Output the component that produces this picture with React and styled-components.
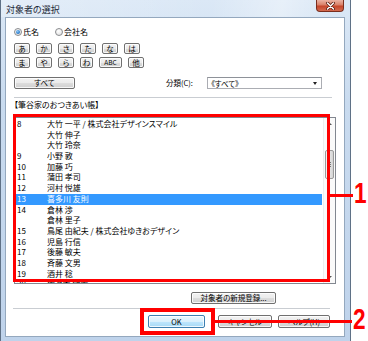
import styled, { createGlobalStyle } from 'styled-components';

const GlobalStyle = createGlobalStyle`
  html, body {
    margin: 0;
    padding: 0;
    background: #fff;
  }
  body {
    font-family: "Noto Sans CJK JP", "Noto Sans", sans-serif;
    font-feature-settings: "palt";
    color: #000;
  }
`;

const Page = styled.div`
  position: relative;
  width: 368px;
  height: 341px;
  overflow: hidden;
  background: #fff;
`;

const Window = styled.div`
  width: 351px;
  height: 341px;
  box-sizing: border-box;
  display: flex;
  flex-direction: column;
  border-left: 1px solid #5f7186;
  border-right: 1px solid #5f7186;
  background: linear-gradient(180deg, #dbe8f6 0%, #c9dbef 30%, #bfd3eb 100%);
`;

const TitleBar = styled.div`
  height: 17px;
  flex-shrink: 0;
  display: flex;
  align-items: flex-start;
  padding-left: 5px;
  background: linear-gradient(100deg, rgba(255,255,255,0.25) 0%, rgba(255,255,255,0) 60%, rgba(255,255,255,0.35) 80%, rgba(255,255,255,0) 95%);
`;

const Title = styled.span`
  font-size: 9px;
  line-height: 17px;
  margin-top: 1px;
  color: #1e2a38;
`;

const CloseButton = styled.div`
  margin-left: auto;
  margin-right: 6px;
  width: 28px;
  height: 12px;
  box-sizing: border-box;
  border: 1px solid #7a2d1d;
  border-top: none;
  border-radius: 0 0 4px 4px;
  background: linear-gradient(180deg, #eab2a3 0%, #d98068 45%, #c5452a 55%, #d36a4f 100%);
  display: flex;
  align-items: center;
  justify-content: center;
`;

const Client = styled.div`
  flex: 1;
  margin: 0 5px 4px 4px;
  background: #fff;
  border: 1px solid #94a8be;
  display: flex;
  flex-direction: column;
  padding: 9px 8px 0 8px;
  min-height: 0;
`;

const RadioRow = styled.div`
  display: flex;
  align-items: center;
  height: 10px;
`;

const RadioOption = styled.label`
  display: flex;
  align-items: center;
  font-size: 8px;
  line-height: 10px;
  margin-right: 16px;
`;

const RadioCircle = styled.span`
  width: 8px;
  height: 8px;
  box-sizing: border-box;
  border-radius: 50%;
  border: 1px solid #8a8c8f;
  background: radial-gradient(circle at 40% 35%, #ffffff 0%, #e6e6e6 70%, #d2d2d2 100%);
  margin-right: 1px;
  display: flex;
  align-items: center;
  justify-content: center;
  &::after {
    content: "";
    display: ${p => (p.$checked ? 'block' : 'none')};
    width: 4px;
    height: 4px;
    border-radius: 50%;
    background: radial-gradient(circle at 40% 35%, #8cc8f5 0%, #2f7fcf 60%, #1a4f8c 100%);
  }
`;

const KanaRow = styled.div`
  display: flex;
  gap: 6px;
  height: 11px;
  margin-top: ${p => p.$top}px;
`;

const Button = styled.button`
  box-sizing: border-box;
  margin: 0 ${p => p.$after || 0}px 0 0;
  padding: 0;
  width: ${p => p.$w}px;
  height: 100%;
  border: 1px solid ${p => (p.$default ? '#3c7fb1' : '#707070')};
  border-radius: 2px;
  background: ${p =>
    p.$default
      ? 'linear-gradient(180deg, #eaf6fd 0%, #d9f0fc 50%, #bee6fd 51%, #a7d9f5 100%)'
      : 'linear-gradient(180deg, #f2f2f2 0%, #ebebeb 50%, #dddddd 51%, #cfcfcf 100%)'};
  box-shadow: inset 0 0 0 1px rgba(255, 255, 255, 0.8);
  font-family: "Noto Sans CJK JP", "Noto Sans", sans-serif;
  font-feature-settings: "palt";
  font-size: ${p => p.$fs || 7.5}px;
  line-height: 1;
  color: #000;
  display: flex;
  align-items: center;
  justify-content: center;
  white-space: nowrap;
  overflow: hidden;
  flex-shrink: 0;
`;

const FilterRow = styled.div`
  display: flex;
  align-items: center;
  height: 12px;
  margin-top: 9px;
`;

const FilterLabel = styled.span`
  margin-left: 91px;
  width: 41px;
  font-size: 7.5px;
  line-height: 12px;
  white-space: nowrap;
`;

const Select = styled.div`
  width: 115px;
  height: 12px;
  box-sizing: border-box;
  border: 1px solid #abadb3;
  border-top-color: #8e9299;
  background: #fff;
  display: flex;
  align-items: center;
  padding: 0 4px 0 3px;
  font-size: 7.5px;
  justify-content: space-between;
`;

const Caret = styled.span`
  width: 0;
  height: 0;
  border-left: 2.5px solid transparent;
  border-right: 2.5px solid transparent;
  border-top: 3px solid #222;
`;

const Divider = styled.div`
  height: 1px;
  background: #c9cdd2;
  box-shadow: 0 1px 0 #fff;
  margin: ${p => p.$top}px ${p => p.$right}px 0 ${p => p.$left || 0}px;
  flex-shrink: 0;
`;

const GroupLabel = styled.div`
  margin-top: 1px;
  font-size: 8px;
  line-height: 11px;
  height: 11px;
  white-space: nowrap;
`;

const ListBox = styled.div`
  margin-top: 7px;
  height: 167px;
  flex-shrink: 0;
  box-sizing: border-box;
  border: 1px solid #828790;
  display: flex;
  overflow: hidden;
  background: #fff;
`;

const Rows = styled.div`
  flex: 1;
  padding: 1px 1px 0;
  overflow: hidden;
`;

const Row = styled.div`
  display: flex;
  height: 10.7px;
  line-height: 10.7px;
  font-size: 8px;
  white-space: nowrap;
  padding-left: 1px;
  background: ${p => (p.$selected ? '#3399ff' : 'transparent')};
  color: ${p => (p.$selected ? '#fff' : '#000')};
`;

const RowNo = styled.span`
  width: 30px;
  flex-shrink: 0;
`;

const Scrollbar = styled.div`
  width: 12px;
  flex-shrink: 0;
  display: flex;
  flex-direction: column;
  background: #fafafa;
  border-left: 1px solid #ededed;
  box-sizing: border-box;
`;

const ScrollArrow = styled.div`
  height: 12px;
  display: flex;
  align-items: center;
  justify-content: center;
  &::after {
    content: "";
    width: 0;
    height: 0;
    border-left: 2px solid transparent;
    border-right: 2px solid transparent;
    ${p => (p.$down ? 'border-top: 2px solid #555;' : 'border-bottom: 2px solid #555;')}
  }
`;

const ScrollTrack = styled.div`
  flex: 1;
  display: flex;
  flex-direction: column;
  align-items: center;
`;

const Thumb = styled.div`
  margin-top: ${p => p.$offset}px;
  width: 9px;
  height: 29px;
  box-sizing: border-box;
  border: 1px solid #9a9a9a;
  border-radius: 2px;
  background: linear-gradient(90deg, #f4f4f4 0%, #e6e6e6 50%, #d4d4d4 100%);
  display: flex;
  flex-direction: column;
  align-items: center;
  justify-content: center;
  gap: 1px;
`;

const Grip = styled.span`
  width: 3px;
  height: 1px;
  background: #777;
`;

const NewRow = styled.div`
  margin-top: 8px;
  height: 12px;
  display: flex;
  padding-left: 177px;
  flex-shrink: 0;
`;

const ActionRow = styled.div`
  margin-top: 6px;
  height: 13px;
  display: flex;
  justify-content: flex-end;
  gap: 6px;
  padding-right: 6px;
  flex-shrink: 0;
`;

const Frame = styled.div`
  position: absolute;
  left: ${p => p.$x}px;
  top: ${p => p.$y}px;
  width: ${p => p.$w}px;
  height: ${p => p.$h}px;
  box-sizing: border-box;
  border: ${p => p.$t}px solid #ff0000;
`;

const Leader = styled.div`
  position: absolute;
  left: ${p => p.$x}px;
  top: ${p => p.$y}px;
  width: ${p => p.$w}px;
  height: 3px;
  background: #ff0000;
`;

const Callout = styled.div`
  position: absolute;
  left: ${p => p.$x}px;
  top: ${p => p.$y}px;
  font-family: "Liberation Sans", Arial, sans-serif;
  font-weight: 700;
  font-size: 29px;
  line-height: 29px;
  color: #ff0000;
  transform: scaleX(0.78);
  transform-origin: left top;
`;

const kanaTop = [
  { t: 'あ' }, { t: 'か' }, { t: 'さ' }, { t: 'た' }, { t: 'な' }, { t: 'は' },
];
const kanaBottom = [
  { t: 'ま', w: 16 }, { t: 'や', w: 16 }, { t: 'ら', w: 16 }, { t: 'わ', w: 13 }, { t: 'ABC', w: 23, fs: 6.5 }, { t: '他', w: 16 },
];

const people = [
  { no: '8', name: '大竹 一平 / 株式会社デザインスマイル' },
  { no: '', name: '大竹 伸子' },
  { no: '', name: '大竹 玲奈' },
  { no: '9', name: '小野 敦' },
  { no: '10', name: '加藤 巧' },
  { no: '11', name: '蒲田 孝司' },
  { no: '12', name: '河村 悦雄' },
  { no: '13', name: '喜多川 友則', selected: true },
  { no: '14', name: '倉林 渉' },
  { no: '', name: '倉林 里子' },
  { no: '15', name: '鳥尾 由紀夫 / 株式会社ゆきおデザイン' },
  { no: '16', name: '児島 行信' },
  { no: '17', name: '後藤 敏夫' },
  { no: '18', name: '斉藤 文男' },
  { no: '19', name: '酒井 稔' },
  { no: '20', name: '佐々木 健太' },
];

function App() {
  return (
    <Page>
      <GlobalStyle />
      <Window>
        <TitleBar>
          <Title>対象者の選択</Title>
          <CloseButton>
            <svg width="11" height="8" viewBox="0 0 11 8">
              <path d="M2.5 1 L8.5 7 M8.5 1 L2.5 7" stroke="#5a1a0e" strokeWidth="3" strokeLinecap="round" />
              <path d="M2.5 1 L8.5 7 M8.5 1 L2.5 7" stroke="#fff" strokeWidth="1.5" strokeLinecap="round" />
            </svg>
          </CloseButton>
        </TitleBar>
        <Client>
          <RadioRow>
            <RadioOption><RadioCircle $checked />氏名</RadioOption>
            <RadioOption><RadioCircle />会社名</RadioOption>
          </RadioRow>
          <KanaRow $top={6}>
            {kanaTop.map(k => <Button key={k.t} $w={16}>{k.t}</Button>)}
          </KanaRow>
          <KanaRow $top={3}>
            {kanaBottom.map(k => <Button key={k.t} $w={k.w} $fs={k.fs}>{k.t}</Button>)}
          </KanaRow>
          <FilterRow>
            <Button $w={61}>すべて</Button>
            <FilterLabel>分類(C):</FilterLabel>
            <Select>
              <span>《すべて》</span>
              <Caret />
            </Select>
          </FilterRow>
          <Divider $top={8} $right={4} />
          <GroupLabel>【筆谷家のおつきあい帳】</GroupLabel>
          <ListBox>
            <Rows>
              {people.map((p, i) => (
                <Row key={i} $selected={p.selected}>
                  <RowNo>{p.no}</RowNo>
                  <span>{p.name}</span>
                </Row>
              ))}
            </Rows>
            <Scrollbar>
              <ScrollArrow />
              <ScrollTrack>
                <Thumb $offset={20}>
                  <Grip /><Grip /><Grip />
                </Thumb>
              </ScrollTrack>
              <ScrollArrow $down />
            </Scrollbar>
          </ListBox>
          <NewRow>
            <Button $w={85}>対象者の新規登録...</Button>
          </NewRow>
          <Divider $top={4} $right={6} $left={-1} />
          <ActionRow>
            <Button $w={57} $default $after={7}>OK</Button>
            <Button $w={54}>キャンセル</Button>
            <Button $w={52}>ヘルプ(H)</Button>
          </ActionRow>
        </Client>
      </Window>

      <Frame $x={13} $y={114} $w={317} $h={168} $t={3} />
      <Leader $x={330} $y={194} $w={23} />
      <Callout $x={354} $y={179}>1</Callout>

      <Frame $x={140} $y={308} $w={75} $h={27} $t={4} />
      <Leader $x={215} $y={320} $w={137} />
      <Callout $x={353} $y={305}>2</Callout>
    </Page>
  );
}

export default App;
